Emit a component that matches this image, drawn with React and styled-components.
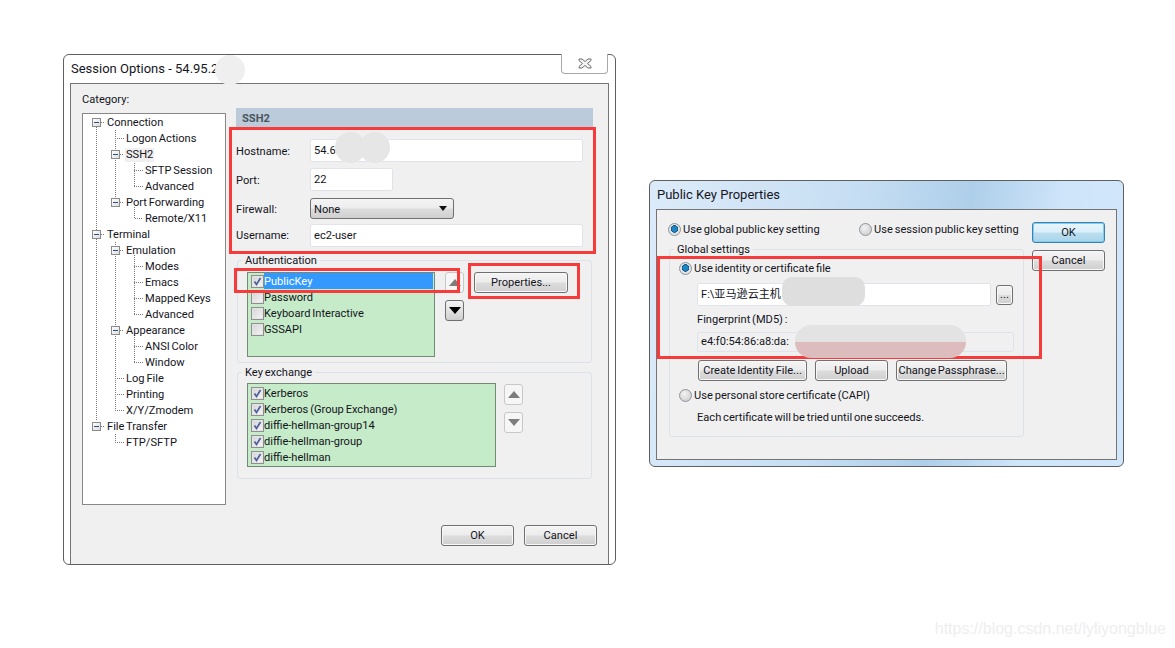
import React from "react";
import styled, { createGlobalStyle, css } from "styled-components";

const Global = createGlobalStyle`
  html, body { margin: 0; padding: 0; background: #fff; }
  body { font-family: Roboto, "Noto Sans CJK SC", sans-serif; font-size: 11.1px; word-spacing: -0.9px; line-height: 14px; color: #14141c; }
  * { box-sizing: border-box; }
`;

const Desktop = styled.div`
  position: relative;
  width: 1175px;
  height: 648px;
  overflow: hidden;
  background: #fff;
`;

const Window = styled.section`
  position: absolute;
  left: ${(p) => p.$x}px;
  top: ${(p) => p.$y}px;
  width: ${(p) => p.$w}px;
  height: ${(p) => p.$h}px;
  display: flex;
  flex-direction: column;
  padding-bottom: ${(p) => p.$pb || 0}px;
  border: 1px solid #5f5f5f;
  border-radius: 6px;
  background: ${(p) => p.$bg};
`;

const TitleBar = styled.header`
  position: relative;
  flex: none;
  height: 28px;
  padding-left: 7px;
  display: flex;
  align-items: center;
  font-size: 13px;
  word-spacing: 0;
  color: #16161e;
`;

const CloseButton = styled.div`
  position: absolute;
  right: 7px;
  top: -1px;
  width: 47px;
  height: 20px;
  display: flex;
  align-items: center;
  justify-content: center;
  border: 1px solid #a9a9a9;
  border-top: none;
  border-radius: 0 0 4px 4px;
  background: #fff;
`;

const Frame = styled.div`
  flex: 1;
  min-height: 0;
  margin: 0 6px;
  border: 1px solid #747474;
  background: #f0f0f0;
  ${(p) => p.$open && css`border-bottom: none;`}
`;

/* ---- generic controls ---- */

const Button = styled.div`
  flex: none;
  width: ${(p) => p.$w}px;
  height: ${(p) => p.$h || 21}px;
  display: flex;
  align-items: center;
  justify-content: center;
  white-space: nowrap;
  border: 1px solid #707070;
  border-radius: 3px;
  box-shadow: inset 0 0 0 1px #f8f8f8;
  background: linear-gradient(#f4f4f4 0%, #ececec 48%, #dddddd 52%, #cfcfcf 100%);
  ${(p) =>
    p.$default &&
    css`
      border-color: #3c7fb1;
      box-shadow: inset 0 0 0 1px #7fd0f0;
      background: linear-gradient(#e8f5fc 0%, #d9effa 48%, #bcdff0 52%, #a9d3e8 100%);
    `}
`;

const Field = styled.div`
  flex: none;
  width: ${(p) => p.$w}px;
  height: ${(p) => p.$h || 23}px;
  display: flex;
  align-items: center;
  padding-left: 3px;
  white-space: nowrap;
  overflow: hidden;
  border: 1px solid #e2e3ea;
  border-radius: 2px;
  background: ${(p) => (p.$disabled ? "#f0f0f0" : "#fff")};
`;

const Select = styled.div`
  width: 144px;
  height: 21px;
  display: flex;
  align-items: center;
  justify-content: space-between;
  padding: 2px 6px 0 3px;
  border: 1px solid #707070;
  border-radius: 3px;
  background: linear-gradient(#f4f4f4 0%, #ececec 48%, #dddddd 52%, #cfcfcf 100%);
`;

const Caret = styled.span`
  width: 0;
  height: 0;
  margin-top: -2px;
  border-left: 4px solid transparent;
  border-right: 4px solid transparent;
  border-top: 5px solid #111;
`;

const Fieldset = styled.fieldset`
  margin: ${(p) => p.$mt}px 0 0 1px;
  padding: ${(p) => p.$pt}px 0 0 9px;
  width: ${(p) => p.$w}px;
  height: ${(p) => p.$h}px;
  min-width: 0;
  border: 1px solid #dce2e8;
  border-radius: 3px;
`;

const Legend = styled.legend`
  margin-left: -5px;
  padding: 0 3px;
  height: 14px;
  line-height: 16px;
`;

const ListRow = styled.div`
  display: flex;
  gap: ${(p) => p.$gap || 10}px;
  align-items: flex-start;
`;

const CheckList = styled.div`
  flex: none;
  width: ${(p) => p.$w}px;
  height: ${(p) => p.$h}px;
  padding-top: ${(p) => p.$pt || 0}px;
  border: 1px solid #728a76;
  background: #c6ebc9;
`;

const CheckRow = styled.div`
  height: 16px;
  display: flex;
  align-items: center;
  padding-left: 3px;
`;

const CheckBox = styled.span`
  flex: none;
  width: 13px;
  height: 13px;
  display: flex;
  border: 1px solid #8f8f8f;
  background: linear-gradient(135deg, #d4d4d4, #f6f6f6);
  box-shadow: inset 0 0 0 1px #e4e4e4;
`;

const CheckLabel = styled.span`
  flex: 1;
  height: 16px;
  display: flex;
  align-items: center;
  padding-top: 2px;
  ${(p) => p.$selected && css`background: #3399ff; color: #fff; margin-right: 1px;`}
`;

const ArrowColumn = styled.div`
  flex: none;
  display: flex;
  flex-direction: column;
  gap: ${(p) => p.$gap}px;
  padding-top: ${(p) => p.$pt || 0}px;
`;

const ArrowButton = styled.div`
  width: 19px;
  height: 21px;
  display: flex;
  align-items: center;
  justify-content: center;
  border-radius: 3px;
  border: 1px solid ${(p) => (p.$enabled ? "#707070" : "#c8c8c8")};
  background: ${(p) => (p.$enabled ? "linear-gradient(#f4f4f4, #e2e2e2 50%, #cfcfcf)" : "#f6f6f6")};
`;

const Triangle = styled.span`
  width: 0;
  height: 0;
  border-left: 6px solid transparent;
  border-right: 6px solid transparent;
  ${(p) =>
    p.$down
      ? css`border-top: 7px solid ${p.$enabled ? "#000" : "#7d7d7d"};`
      : css`border-bottom: 7px solid ${p.$enabled ? "#000" : "#7d7d7d"};`}
`;

/* ---- session options ---- */

const SessionBody = styled.div`
  height: 100%;
  padding: 8px 0 0 11px;
  display: grid;
  grid-template-columns: 144px 361px;
  column-gap: 10px;
  align-items: start;
`;

const CategoryColumn = styled.div`
  display: flex;
  flex-direction: column;
`;

const CategoryLabel = styled.div`
  height: 21px;
  line-height: 16px;
`;

const Tree = styled.div`
  position: relative;
  width: 144px;
  height: 392px;
  border: 1px solid #888;
  background: #fff;
`;

const TreeLines = styled.svg`
  position: absolute;
  left: 0;
  top: 0;
  width: 142px;
  height: 390px;
`;

const TreeRow = styled.div`
  position: relative;
  height: 16px;
  display: flex;
  align-items: center;
  padding-left: ${(p) => [9, 28, 47][p.$level]}px;
`;

const ExpanderSlot = styled.span`
  flex: none;
  width: 15px;
  display: flex;
`;

const Expander = styled.span`
  width: 9px;
  height: 9px;
  display: flex;
  align-items: center;
  justify-content: center;
  border: 1px solid #8b8b8b;
  background: linear-gradient(135deg, #fff, #dcdcdc);
  &::before {
    content: "";
    width: 5px;
    height: 1px;
    background: #2e4f86;
  }
`;

const TreeLabel = styled.span`
  margin-top: 2px;
  white-space: nowrap;
  ${(p) => p.$current && css`background: #f0f0f0; margin-left: -1px; padding: 0 1px;`}
`;

const SettingsColumn = styled.div`
  padding-top: 16px;
  display: flex;
  flex-direction: column;
`;

const SectionHeader = styled.div`
  width: 357px;
  height: 20px;
  padding: 2px 0 0 6px;
  display: flex;
  align-items: center;
  font-weight: 700;
  color: #4a5560;
  background: #bccbd9;
`;

const FormGrid = styled.div`
  margin-top: 11px;
  display: grid;
  grid-template-columns: 74px 1fr;
  grid-template-rows: 29px 30px 26px 23px;
  align-items: start;
`;

const FormLabel = styled.label`
  height: 23px;
  display: flex;
  align-items: center;
  padding-top: ${(p) => p.$pt || 0}px;
`;

const DialogActions = styled.div`
  margin-top: 46px;
  display: flex;
  justify-content: flex-end;
  gap: 10px;
`;

/* ---- public key properties ---- */

const KeyBody = styled.div`
  padding: 12px 0 0 11px;
  display: grid;
  grid-template-columns: 364px 73px;
  align-items: start;
`;

const KeyMain = styled.div`
  display: flex;
  flex-direction: column;
`;

const RadioRow = styled.div`
  height: 14px;
  display: flex;
  align-items: center;
  margin-top: ${(p) => p.$mt || 0}px;
`;

const RadioChoice = styled.div`
  display: flex;
  align-items: center;
  gap: 2px;
  white-space: nowrap;
  ${(p) => p.$w && css`width: ${p.$w}px;`}
`;

const RadioText = styled.span`
  margin-top: 2px;
`;

const Radio = styled.span`
  flex: none;
  width: 13px;
  height: 13px;
  border-radius: 50%;
  border: 1px solid #8e9399;
  background: ${(p) =>
    p.$on
      ? "radial-gradient(circle at 50% 45%, #1f86c4 0 2.5px, #0c4a78 3.5px, #dfe3e6 4px, #e8e8e8)"
      : "radial-gradient(circle at 40% 35%, #f2f2f2, #c8c8c8)"};
`;

const KeyFieldset = styled.fieldset`
  margin: 6px 0 0 1px;
  padding: 5px 0 0 9px;
  width: 355px;
  height: 195px;
  min-width: 0;
  border: 1px solid #dce2e8;
  border-radius: 3px;
`;

const Indented = styled.div`
  margin-top: ${(p) => p.$mt || 0}px;
  padding-left: 18px;
  display: flex;
  align-items: center;
  gap: ${(p) => p.$gap || 0}px;
`;

const ActionButtons = styled.div`
  margin: 8px 0 0 19px;
  display: flex;
  gap: 8px;
`;

const SideButtons = styled.div`
  display: flex;
  flex-direction: column;
  gap: 7px;
`;

/* ---- over the content ---- */

const RedBox = styled.div`
  position: absolute;
  left: ${(p) => p.$x}px;
  top: ${(p) => p.$y}px;
  width: ${(p) => p.$w}px;
  height: ${(p) => p.$h}px;
  border: 3px solid #f73a3a;
  pointer-events: none;
`;

const Smudge = styled.div`
  position: absolute;
  left: ${(p) => p.$x}px;
  top: ${(p) => p.$y}px;
  width: ${(p) => p.$w}px;
  height: ${(p) => p.$h}px;
  border-radius: ${(p) => p.$r || 14}px;
  background: ${(p) => p.$bg || "#e6e6e6"};
  pointer-events: none;
`;

const Watermark = styled.div`
  position: absolute;
  right: 9px;
  top: 620px;
  font-family: "Liberation Sans", sans-serif;
  font-size: 16px;
  word-spacing: 0;
  line-height: 18px;
  color: #eeeeee;
`;

const Check = () => (
  <svg width="11" height="11" viewBox="0 0 11 11">
    <path d="M2.5 5.5 L4.5 8.5 L8.5 2" fill="none" stroke="#4b5f9b" strokeWidth="1.7" />
  </svg>
);

const ListItem = ({ label, checked, selected }) => (
  <CheckRow>
    <CheckBox>{checked && <Check />}</CheckBox>
    <CheckLabel $selected={selected}>{label}</CheckLabel>
  </CheckRow>
);

const treeItems = [
  [0, "Connection", true],
  [1, "Logon Actions"],
  [1, "SSH2", true, true],
  [2, "SFTP Session"],
  [2, "Advanced"],
  [1, "Port Forwarding", true],
  [2, "Remote/X11"],
  [0, "Terminal", true],
  [1, "Emulation", true],
  [2, "Modes"],
  [2, "Emacs"],
  [2, "Mapped Keys"],
  [2, "Advanced"],
  [1, "Appearance", true],
  [2, "ANSI Color"],
  [2, "Window"],
  [1, "Log File"],
  [1, "Printing"],
  [1, "X/Y/Zmodem"],
  [0, "File Transfer", true],
  [1, "FTP/SFTP"],
];

const linePaths = [
  "M96 127V421",
  "M101 122H105M101 234H105M101 426H105",
  "M115 130V202M115 138H124",
  "M120 154H124M120 202H124",
  "M134 159V186M134 170H143M134 186H143",
  "M134 207V218H143",
  "M115 242V410M120 250H124M120 330H124M115 378H124M115 394H124M115 410H124",
  "M134 255V314M134 266H143M134 282H143M134 298H143M134 314H143",
  "M134 335V362M134 346H143M134 362H143",
  "M115 434V442H124",
];

const TreeConnectors = () => (
  <TreeLines viewBox="83 114 142 390">
    {linePaths.map((d) => (
      <path key={d} d={d} fill="none" stroke="#7a7a7a" strokeDasharray="1 1" shapeRendering="crispEdges" />
    ))}
  </TreeLines>
);

export default function App() {
  return (
    <Desktop>
      <Global />

      <Window $x={63} $y={54} $w={553} $h={511} $bg="#fff">
        <TitleBar>
          Session Options - 54.95.2
          <CloseButton>
            <svg width="14" height="11" viewBox="0 0 14 11">
              <path
                d="M1 1H4L7 3.5L10 1H13V2.5L9.5 5.5L13 8.5V10H10L7 7.5L4 10H1V8.5L4.5 5.5L1 2.5Z"
                fill="#f4f4f4"
                stroke="#6d6d6d"
              />
            </svg>
          </CloseButton>
        </TitleBar>
        <Frame $open>
          <SessionBody>
            <CategoryColumn>
              <CategoryLabel>Category:</CategoryLabel>
              <Tree>
                <TreeConnectors />
                {treeItems.map(([level, label, expandable, current]) => (
                  <TreeRow key={label + level + (current ? 1 : 0)} $level={level}>
                    <ExpanderSlot>{expandable && <Expander />}</ExpanderSlot>
                    <TreeLabel $current={current}>{label}</TreeLabel>
                  </TreeRow>
                ))}
              </Tree>
            </CategoryColumn>

            <SettingsColumn>
              <SectionHeader>SSH2</SectionHeader>
              <FormGrid>
                <FormLabel $pt={3}>Hostname:</FormLabel>
                <Field $w={273}>54.6</Field>
                <FormLabel $pt={2}>Port:</FormLabel>
                <Field $w={83}>22</Field>
                <FormLabel>Firewall:</FormLabel>
                <Select>
                  None
                  <Caret />
                </Select>
                <FormLabel>Username:</FormLabel>
                <Field $w={273}>ec2-user</Field>
              </FormGrid>

              <Fieldset $mt={6} $pt={5} $w={355} $h={110}>
                <Legend>Authentication</Legend>
                <ListRow>
                  <CheckList $w={188} $h={85}>
                    <ListItem label="PublicKey" checked selected />
                    <ListItem label="Password" />
                    <ListItem label="Keyboard Interactive" />
                    <ListItem label="GSSAPI" />
                  </CheckList>
                  <ArrowColumn $gap={7}>
                    <ArrowButton>
                      <Triangle />
                    </ArrowButton>
                    <ArrowButton $enabled>
                      <Triangle $down $enabled />
                    </ArrowButton>
                  </ArrowColumn>
                  <Button $w={94}>Properties...</Button>
                </ListRow>
              </Fieldset>

              <Fieldset $mt={2} $pt={4} $w={355} $h={114}>
                <Legend>Key exchange</Legend>
                <ListRow $gap={8}>
                  <CheckList $w={249} $h={84} $pt={1}>
                    <ListItem label="Kerberos" checked />
                    <ListItem label="Kerberos (Group Exchange)" checked />
                    <ListItem label="diffie-hellman-group14" checked />
                    <ListItem label="diffie-hellman-group" checked />
                    <ListItem label="diffie-hellman" checked />
                  </CheckList>
                  <ArrowColumn $gap={7} $pt={1}>
                    <ArrowButton>
                      <Triangle />
                    </ArrowButton>
                    <ArrowButton>
                      <Triangle $down />
                    </ArrowButton>
                  </ArrowColumn>
                </ListRow>
              </Fieldset>

              <DialogActions>
                <Button $w={73}>OK</Button>
                <Button $w={73}>Cancel</Button>
              </DialogActions>
            </SettingsColumn>
          </SessionBody>
        </Frame>
      </Window>

      <Window
        $x={649}
        $y={180}
        $w={475}
        $h={287}
        $pb={6}
        $bg="linear-gradient(100deg, #dcebf9 0%, #c6def3 40%, #aecfea 62%, #cfe5fa 80%, #d2e7fb 100%)"
      >
        <TitleBar>Public Key Properties</TitleBar>
        <Frame>
          <KeyBody>
            <KeyMain>
              <RadioRow>
                <RadioChoice $w={191}>
                  <Radio $on />
                  <RadioText>Use global public key setting</RadioText>
                </RadioChoice>
                <RadioChoice>
                  <Radio />
                  <RadioText>Use session public key setting</RadioText>
                </RadioChoice>
              </RadioRow>
              <KeyFieldset>
                <Legend>Global settings</Legend>
                <RadioRow>
                  <RadioChoice>
                    <Radio $on />
                    <RadioText>Use identity or certificate file</RadioText>
                  </RadioChoice>
                </RadioRow>
                <Indented $mt={8} $gap={5}>
                  <Field $w={294}>F:\亚马逊云主机</Field>
                  <Button $w={17} $h={20}>...</Button>
                </Indented>
                <Indented $mt={7}>Fingerprint (MD5) :</Indented>
                <Indented $mt={5}>
                  <Field $w={317} $h={20} $disabled>
                    e4:f0:54:86:a8:da:
                  </Field>
                </Indented>
                <ActionButtons>
                  <Button $w={109}>Create Identity File...</Button>
                  <Button $w={73}>Upload</Button>
                  <Button $w={111}>Change Passphrase...</Button>
                </ActionButtons>
                <RadioRow $mt={7}>
                  <RadioChoice>
                    <Radio />
                    <RadioText>Use personal store certificate (CAPI)</RadioText>
                  </RadioChoice>
                </RadioRow>
                <Indented $mt={9}>Each certificate will be tried until one succeeds.</Indented>
              </KeyFieldset>
            </KeyMain>
            <SideButtons>
              <Button $w={73} $default>OK</Button>
              <Button $w={73}>Cancel</Button>
            </SideButtons>
          </KeyBody>
        </Frame>
      </Window>

      <RedBox $x={229} $y={127} $w={367} $h={127} />
      <RedBox $x={234} $y={268} $w={226} $h={25} />
      <RedBox $x={468} $y={263} $w={112} $h={36} />
      <RedBox $x={657} $y={256} $w={385} $h={103} />

      <Smudge $x={215} $y={55} $w={30} $h={30} $r={15} $bg="#efefef" />
      <Smudge $x={335} $y={132} $w={31} $h={31} $r={16} />
      <Smudge $x={359} $y={132} $w={31} $h={31} $r={16} />
      <Smudge $x={782} $y={277} $w={83} $h={29} $r={10} $bg="#dedede" />
      <Smudge
        $x={795}
        $y={325}
        $w={171}
        $h={33}
        $r={16}
        $bg="linear-gradient(#e3e3e3 0 17px, #dcbcbc 17px 100%)"
      />
      <Watermark>https://blog.csdn.net/lyliyongblue</Watermark>
    </Desktop>
  );
}
